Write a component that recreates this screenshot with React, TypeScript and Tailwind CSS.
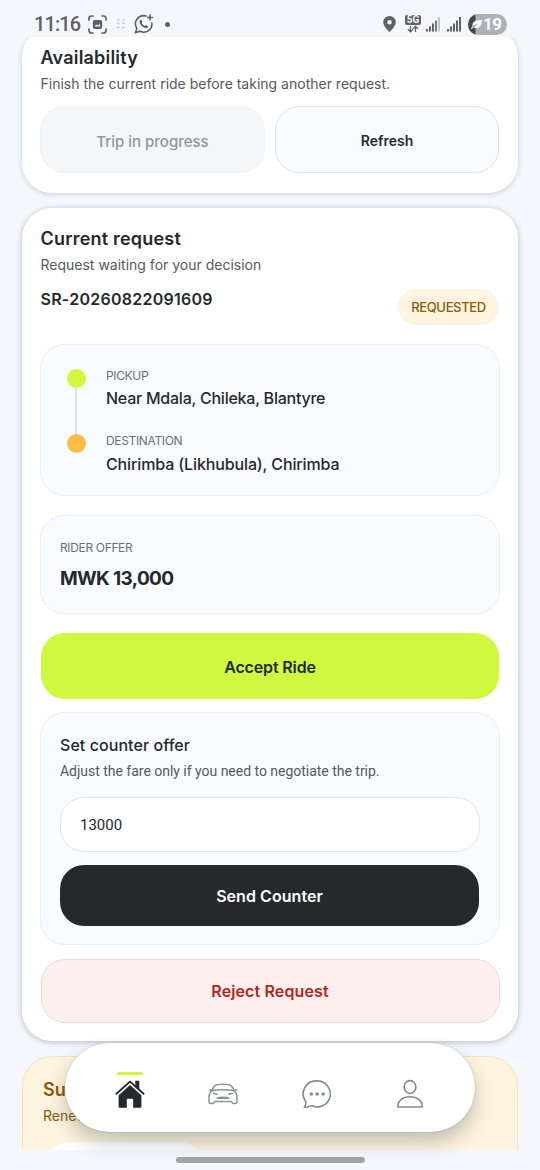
import React, { useState } from 'react';
import { clsx } from 'clsx';

const HomeIcon = () => (
  <svg width="30" height="30" viewBox="0 0 30 30" fill="none">
    <path d="M1.4 14.8 15 2.6l13.6 12.2" stroke="#25292c" strokeWidth="1.9" strokeLinecap="round" strokeLinejoin="round" />
    <path d="M20.3 1.8h4v8.6l-4-3.6z" fill="#25292c" />
    <path d="M15 6 3.6 16.2v11c0 1 .5 1.6 1.5 1.6h6.7v-8.2c0-.5.3-.8.8-.8h4.8c.5 0 .8.3.8.8v8.2h6.7c1 0 1.5-.6 1.5-1.6v-11z" fill="#25292c" />
  </svg>
);

const CarIcon = () => (
  <svg width="30" height="22" viewBox="0 0 30 22" fill="none" stroke="#8d9295" strokeWidth="1.5" strokeLinecap="round" strokeLinejoin="round">
    <path d="M3.6 8C4.600 5.600 5.600 3.700 6.900 2.600 8.200 1.600 11 1.200 15 1.200s6.800.4 8.100 1.400c1.300 1.100 2.300 3 3.300 5.400" />
    <path d="M4.200 7.800C6 7 10 6.800 15 6.800s9 .2 10.800 1" />
    <path d="M3.600 8C1.600 9.600 1 11.800 1 14.500v4c0 1.300.7 2 1.900 2h1.300c1 0 1.600-.5 1.900-1.300.2-.5.7-.8 1.300-.8h15.200c.6 0 1.100.3 1.300.8.3.8.9 1.300 1.900 1.300h1.300c1.200 0 1.900-.7 1.900-2v-4c0-2.700-.6-4.900-2.600-6.500" />
    <path d="m5.500 10.300 3.500 1M24.500 10.300l-3.500 1" />
    <path d="M9.200 15.200c1.400-.8 3.400-1 5.800-1s4.400.2 5.800 1z" fill="#8d9295" />
    <path d="M1.300 6.900h1.900M28.700 6.900h-1.900" />
  </svg>
);

const ChatIcon = () => (
  <svg width="30" height="30" viewBox="0 0 30 30" fill="none">
    <path d="M15.300 1.900a13 13 0 1 1-5.200 24.900c-1.500-.6-2.500.8-4.200 1.300-1.100.3-2.500.2-3.500 0 1.500-1.800 2-3.800 1.100-5.900A13 13 0 0 1 15.300 1.900Z" stroke="#84898d" strokeWidth="1.6" strokeLinejoin="round" />
    <circle cx="9.3" cy="15" r="1.8" fill="#84898d" />
    <circle cx="15.2" cy="15" r="1.8" fill="#84898d" />
    <circle cx="21.1" cy="15" r="1.8" fill="#84898d" />
  </svg>
);

const UserIcon = () => (
  <svg width="30" height="30" viewBox="0 0 30 30" fill="none" stroke="#84898d" strokeWidth="1.6" strokeLinejoin="round">
    <ellipse cx="15" cy="8" rx="5.9" ry="6.4" />
    <path d="M2.800 28c-.1-6.500 5.300-10.200 12.200-10.200S27.300 21.500 27.200 28z" />
  </svg>
);

const Signal = ({ dim }: { dim?: boolean }) => (
  <svg width="15" height="16" viewBox="0 0 15 16" fill="#5f6163">
    <rect x="0" y="13" width="2" height="2.5" />
    <rect x="3" y="10.5" width="2" height="5" />
    <rect x="6" y="7.5" width="2" height="8" />
    <rect x="9" y="4.5" width="2" height="11" fill={dim ? '#77797b' : '#5f6163'} />
    <rect x="12" y="1" width="2" height="14.5" fill={dim ? '#c3c6ca' : '#5f6163'} />
  </svg>
);

function StatusBar() {
  return (
    <header className="z-20 flex h-[37px] shrink-0 items-start bg-[#f4f8fd] pt-[12px] text-[#5f6163]">
      <div className="ml-[34px] flex h-6 items-center">
        <span className="w-[46px] whitespace-nowrap font-['Roboto'] text-[20px] leading-6 font-medium tracking-[-0.9px]">11:16</span>
        <svg className="ml-2" width="19" height="19" viewBox="0 0 19 19" fill="none" stroke="#5f6163" strokeWidth="1.7" strokeLinecap="round">
          <path d="M1 5V3.500Q1 1 3.500 1H5M14 1h1.500Q18 1 18 3.500V5M18 14v1.500q0 2.500-2.500 2.500H14M5 18H3.500Q1 18 1 15.500V14" />
          <rect x="4.8" y="5" width="9.4" height="9" rx="2" fill="#5f6163" stroke="none" />
          <path d="m6.500 11.500 2-2 1.500 1.300 2-2.200v2.900z" fill="#f4f8fd" stroke="none" />
        </svg>
        <svg className="ml-[9px]" width="10" height="10" viewBox="0 0 10 10" stroke="#b2b5b9" strokeWidth="1.2">
          <path d="M1 1h2.500M6 1h2.500M.5 4h3M6 4h3M1 8.500h2.500M6 8.500h2.500" />
        </svg>
        <svg className="ml-[8px]" width="20" height="20" viewBox="0 0 20 20" fill="none" stroke="#5f6163" strokeWidth="1.6" strokeLinecap="round">
          <path d="M12 2.100A8 8 0 0 0 2.900 14.200L1.500 18.500l4.600-1.300A8 8 0 0 0 17.800 9" />
          <path d="M16 1v5M13.500 3.500h5" />
          <path d="M6.100 6.200c.5-.7 1.200-.6 1.500 0l.7 1.500c.1.400-.6 1-.5 1.400.6 1.300 1.700 2.200 3 2.800.5.100 1-.8 1.400-.7l1.500.8c.6.300.4 1-.1 1.500-1.100 1.100-2.600.6-4.200-.2-1.700-.9-3-2.400-3.600-4-.4-1.200-.4-2.300.3-3.100z" fill="#5f6163" stroke="none" />
        </svg>
        <span className="ml-[11px] size-[5px] rounded-full bg-[#5f6163]" />
      </div>
      <div className="mr-[33px] ml-auto flex h-6 items-center">
        <svg width="13" height="16" viewBox="0 0 13 16">
          <path d="M6.500 0A6.300 6.300 0 0 0 .2 6.300C.2 10.500 6.500 16 6.500 16s6.300-5.500 6.300-9.700A6.300 6.300 0 0 0 6.500 0Zm0 4a2.300 2.300 0 1 1 0 4.600 2.300 2.300 0 0 1 0-4.600Z" fill="#5f6163" />
        </svg>
        <div className="ml-[9px] flex w-[16px] flex-col items-center">
          <span className="h-[10px] w-4 rounded-[2px] bg-[#5f6163] text-center font-['Roboto'] text-[10px] leading-[10px] font-bold text-[#f4f8fd]">5G</span>
          <svg width="12" height="8" viewBox="0 0 12 8" fill="none" stroke="#5f6163" strokeWidth="1.3">
            <path d="M3.500 1v5.500M1 4.300l2.500 2.500L6 4.300M8.500 7V1.500M6 3.700l2.500-2.500L11 3.700" />
          </svg>
        </div>
        <div className="ml-[5px] flex gap-[6px]">
          <Signal dim />
          <Signal />
        </div>
        <div className="ml-[6px] flex h-[21px] w-[39px] items-center overflow-hidden rounded-full bg-[#adb0b4]">
          <svg width="15" height="21" viewBox="0 0 15 21">
            <path d="M0 0h7.500v21H0z" fill="#444749" />
            <path d="M14 6c-5.500 0-9.500 1.100-9.500 5.200-.1 1.300-.7 2.200-1.700 3.100l1 .9 1.400-1.600C11 15.800 13.600 12 14 6Z" fill="#fff" />
            <path d="m4.500 13.200 4-2.800" stroke="#444749" strokeWidth=".8" />
          </svg>
          <span className="font-['Roboto'] text-[17px] leading-[21px] font-bold tracking-[-0.6px] text-white">19</span>
        </div>
      </div>
    </header>
  );
}

function SectionTitle({ title, text }: { title: string; text: string }) {
  return (
    <>
      <h2 className="pl-[0.5px] text-[18px] leading-[26px] font-semibold tracking-[0.2px] text-[#25292c]">{title}</h2>
      <p className="mt-[3px] pl-[0.5px] text-[14px] leading-[20px] text-[#55595c]">{text}</p>
    </>
  );
}

const stops = [
  { label: 'PICKUP', place: 'Near Mdala, Chileka, Blantyre', dot: 'bg-[#cff83f]', spacing: 'tracking-[-0.24px]' },
  { label: 'DESTINATION', place: 'Chirimba (Likhubula), Chirimba', dot: 'bg-[#ffbd45]', spacing: 'pt-px tracking-[-0.13px]' },
];

const tabs = [
  { id: 'home', icon: HomeIcon },
  { id: 'rides', icon: CarIcon },
  { id: 'chat', icon: ChatIcon },
  { id: 'profile', icon: UserIcon },
];

export default function App() {
  const [counter, setCounter] = useState('13000');
  const [activeTab, setActiveTab] = useState('home');

  return (
    <div className="relative flex h-[1170px] w-[540px] flex-col overflow-hidden bg-[#f4f8fd] font-['Inter',sans-serif] text-[#25292c]">
      <StatusBar />

      <main className="min-h-0 flex-1 overflow-hidden px-[22px]">
        {/* Availability */}
        <section className="-mt-[10px] h-[166px] rounded-[30px] bg-white px-[18px] pt-[18px] shadow-[0_1px_4px_1px_rgba(40,50,60,0.16)]">
          <SectionTitle title="Availability" text="Finish the current ride before taking another request." />
          <div className="mt-[12px] grid grid-cols-[225px_224px] gap-[10px]">
            <button disabled className="flex h-[67px] items-center justify-center rounded-[24px] border border-[#eff3f7] bg-[#f3f7fa] pt-[4px] text-[15px] leading-[20px] font-medium text-[#919598]">Trip in progress</button>
            <button className="flex h-[67px] items-center justify-center rounded-[24px] border border-[#e0e4ea] bg-[#f8fbff] pt-[3px] text-[14px] leading-[20px] font-semibold">Refresh</button>
          </div>
        </section>

        {/* Current request */}
        <section className="mt-[15px] h-[833px] rounded-[30px] bg-white px-[18px] pt-[18px] shadow-[0_1px_5px_1px_rgba(40,50,60,0.24)]">
          <SectionTitle title="Current request" text="Request waiting for your decision" />
          <div className="mt-[14px] flex h-[36px] justify-between pr-px">
            <span className="pl-[0.5px] text-[16px] leading-[20px] font-semibold tracking-[0.26px]">SR-20260822091609</span>
            <span className="flex w-[101px] items-center justify-center rounded-full bg-[#fff4df] pt-px text-[13px] font-medium tracking-[-0.35px] text-[#8b5b09]">REQUESTED</span>
          </div>

          <div className="mt-[19px] h-[152px] rounded-[24px] border border-[#eaeff5] bg-[#f8fbff] pt-[20px] pl-[25px]">
            {stops.map((stop, i) => (
              <div key={stop.label} className="flex h-[65px]">
                <div className="-mb-[4px] flex w-5 flex-col items-center pt-[3.5px]">
                  <span className={clsx('size-[19px] shrink-0 rounded-full', stop.dot)} />
                  {i === 0 && <span className="w-[2px] flex-1 bg-[#dfe2e6]" />}
                </div>
                <div className="ml-5">
                  <div className="pt-px text-[12px] leading-[20px] tracking-[-0.35px] text-[#6b7074]">{stop.label}</div>
                  <div className={clsx('text-[16px] leading-[24px] font-medium', stop.spacing)}>{stop.place}</div>
                </div>
              </div>
            ))}
          </div>

          <div className="mt-[19px] h-[99px] rounded-[24px] border border-[#eaeff5] bg-[#f8fbff] px-[19px] pt-[22px]">
            <div className="text-[12px] leading-[20px] tracking-[-0.35px] text-[#6b7074]">RIDER OFFER</div>
            <div className="mt-[7px] text-[19px] leading-[28px] font-bold tracking-[-0.65px]">MWK 13,000</div>
          </div>

          <button className="mx-auto mt-[19px] flex h-[66px] w-[458px] items-center justify-center rounded-[24px] bg-[#cff83f] pt-[1px] text-[16px] font-semibold tracking-[-0.15px]">Accept Ride</button>

          <div className="mt-[13px] h-[233px] rounded-[24px] border border-[#eaeff5] bg-[#f8fbff] px-[19px] pt-[20px]">
            <h3 className="text-[16px] leading-[24px] font-medium tracking-[0.06px]">Set counter offer</h3>
            <p className="mt-[4px] font-['Roboto'] text-[14px] leading-[20px] tracking-[-0.02px] text-[#55595c]">Adjust the fare only if you need to negotiate the trip.</p>
            <input
              className="mt-[16px] block h-[55px] w-full rounded-[24px] border border-[#e2e5e9] bg-white px-[19px] font-['Roboto'] text-[15px] outline-none"
              value={counter}
              onChange={(e) => setCounter(e.target.value)}
            />
            <button className="mt-[12.5px] h-[61px] w-[419px] rounded-[24px] bg-[#25292c] pt-[2px] text-[16px] font-semibold tracking-[0.05px] text-white">Send Counter</button>
          </div>

          <button className="mx-auto mt-[13.5px] block h-[64px] w-[459px] rounded-[24px] border border-[#f8d5d5] bg-[#fff0ef] pt-[1px] text-[16px] font-semibold tracking-[0.12px] text-[#b3261e]">Reject Request</button>
        </section>

        {/* Subscription */}
        <section className="mt-[15px] h-[160px] rounded-[30px] border border-[#fbe3b6] bg-[#fff4df] px-[20px] pt-[20px] text-[#8b5b09]">
          <h2 className="text-[18px] leading-[26px] font-semibold">Subscription</h2>
          <p className="mt-[3px] text-[14px] leading-[20px]">Renew</p>
          <div className="mt-[16px] ml-[2px] h-[60px] w-[160px] rounded-[26px] bg-white" />
        </section>
      </main>

      <footer className="flex h-5 shrink-0 justify-center bg-[#f4f8fd] pt-[7px]">
        <div className="h-[6px] w-[189px] rounded-full bg-[#a3a5a8]" />
      </footer>

      {/* Floating tab bar */}
      <nav className="absolute top-[1043px] left-[65px] z-10 grid h-[89px] w-[410px] grid-cols-4 rounded-full bg-white px-[18px] shadow-[0_10px_20px_rgba(40,50,60,0.28),0_0_2px_rgba(40,50,60,0.25)]">
        {tabs.map((tab) => (
          <button key={tab.id} onClick={() => setActiveTab(tab.id)} className="flex flex-col items-center pt-[29px]">
            <span className={clsx('h-[3px] w-[26px] shrink-0 rounded-full', activeTab === tab.id && 'bg-[#cff83f]')} />
            <span className="mt-[4px] flex h-[30px] items-center"><tab.icon /></span>
          </button>
        ))}
      </nav>
    </div>
  );
}
